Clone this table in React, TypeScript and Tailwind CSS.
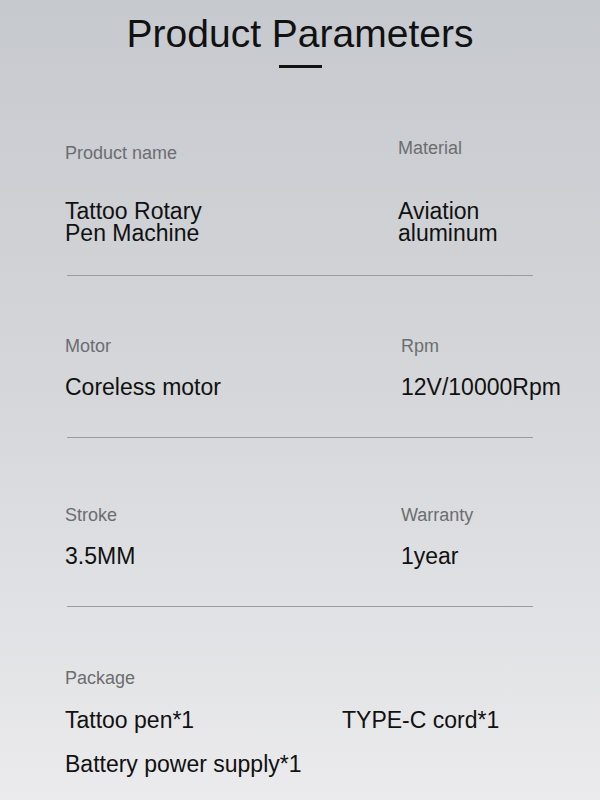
const FONT = { fontFamily: '"Liberation Sans", Arial, sans-serif' };

function Label({ children, className = '' }: { children: React.ReactNode; className?: string }) {
  return <div className={`text-[18px] leading-[18px] text-[#6c6d70] whitespace-nowrap ${className}`}>{children}</div>;
}

function Value({ children, className = '' }: { children: React.ReactNode; className?: string }) {
  return <div className={`text-[23px] leading-[22px] text-[#111] whitespace-nowrap ${className}`}>{children}</div>;
}

function Divider({ className = '' }: { className?: string }) {
  return <div className={`ml-[67px] w-[466px] h-px bg-[#9a9b9e] ${className}`} />;
}

export default function App() {
  return (
    <div
      className="w-[600px] h-[800px] overflow-hidden bg-linear-to-b from-[#c6c9ce] via-[#d5d7da] to-[#ebebed]"
      style={FONT}
    >
      <div className="pt-[14px] flex flex-col items-center">
        <h1 className="text-[39px] leading-[39px] text-[#111] whitespace-nowrap">Product Parameters</h1>
        <div className="mt-[12px] w-[43px] h-[3px] bg-[#111]" />
      </div>

      {/* Product name / Material */}
      <div className="mt-[71px] pl-[65px] grid grid-cols-[333px_1fr]">
        <div className="flex flex-col">
          <Label className="mt-[5px]">Product name</Label>
          <Value className="mt-[38px]">
            Tattoo Rotary
            <br />
            Pen Machine
          </Value>
        </div>
        <div className="flex flex-col">
          <Label>Material</Label>
          <Value className="mt-[43px]">
            Aviation
            <br />
            aluminum
          </Value>
        </div>
      </div>
      <Divider className="mt-[31px]" />

      {/* Motor / Rpm */}
      <div className="mt-[61px] pl-[65px] grid grid-cols-[336px_1fr]">
        <div className="flex flex-col">
          <Label>Motor</Label>
          <Value className="mt-[21px]">Coreless motor</Value>
        </div>
        <div className="flex flex-col">
          <Label>Rpm</Label>
          <Value className="mt-[21px]">12V/10000Rpm</Value>
        </div>
      </div>
      <Divider className="mt-[39px]" />

      {/* Stroke / Warranty */}
      <div className="mt-[68px] pl-[65px] grid grid-cols-[336px_1fr]">
        <div className="flex flex-col">
          <Label>Stroke</Label>
          <Value className="mt-[21px]">3.5MM</Value>
        </div>
        <div className="flex flex-col">
          <Label>Warranty</Label>
          <Value className="mt-[21px]">1year</Value>
        </div>
      </div>
      <Divider className="mt-[39px]" />

      {/* Package */}
      <div className="mt-[62px] pl-[65px]">
        <Label>Package</Label>
        <div className="mt-[22px] grid grid-cols-[277px_1fr]">
          <Value>Tattoo pen*1</Value>
          <Value>TYPE-C cord*1</Value>
        </div>
        <Value className="mt-[22px]">Battery power supply*1</Value>
      </div>
    </div>
  );
}
